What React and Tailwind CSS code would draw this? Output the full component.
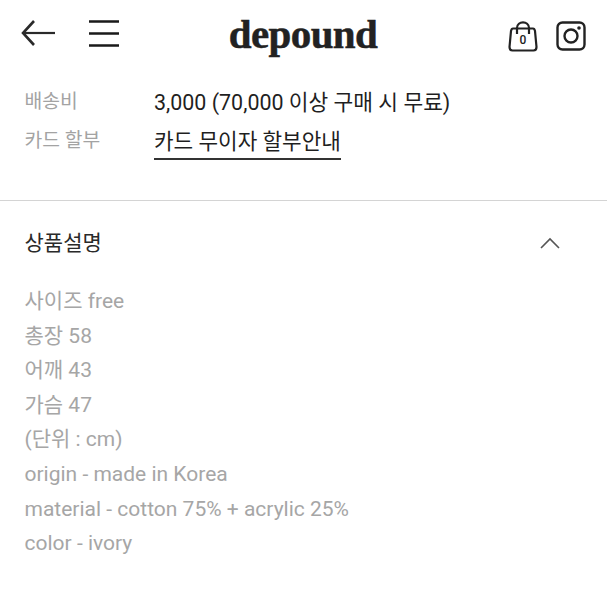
export default function App() {
  const lines = ["사이즈 free", "총장 58", "어깨 43", "가슴 47", "(단위 : cm)", "origin - made in Korea", "material - cotton 75% + acrylic 25%", "color - ivory"];
  return (
    <div className="w-[607px] h-[607px] bg-white overflow-hidden font-['Roboto','Noto_Sans_CJK_KR',sans-serif]">
      <header className="h-[70px] flex items-center justify-between pl-[21px] pr-[21px] pb-[2px]">
        <div className="flex items-center gap-[34px] mb-[2px]">
          <svg width="34" height="28" viewBox="0 0 34 28" fill="none" stroke="#2a2a2a" strokeWidth="2.6">
            <path d="M13 2 L2 14 L13 26" />
            <path d="M2 14 H34" strokeWidth="2.2" />
          </svg>
          <svg width="30" height="28" viewBox="0 0 30 28" fill="none" stroke="#1a1a1a" strokeWidth="2.4">
            <path d="M0 2.5H30M0 14.5H30M0 26.5H30" />
          </svg>
        </div>
        <div className="font-['Liberation_Serif',serif] font-bold text-[41px] leading-none tracking-[-0.6px] text-[#222] [-webkit-text-stroke:0.5px_#222] mr-[21px] mt-[1px]">depound</div>
        <div className="flex items-center gap-[18px] mt-[4px]">
          <div className="relative w-[30px] h-[32px]">
            <svg width="30" height="32" viewBox="0 0 30 32" fill="none" stroke="#222" strokeWidth="2.2">
              <path d="M5 8.5 H25 Q26.5 8.5 27 11 L28.5 27 Q28.5 30.5 25.5 30.5 H4.5 Q1.5 30.5 1.5 27 L3 11 Q3.500 8.500 5 8.500Z" strokeLinejoin="round" />
              <path d="M9 14 V8 C9 0.500 21 0.500 21 8 V14" />
            </svg>
            <span className="absolute left-0 right-0 top-[13px] text-center text-[12px] leading-[14px] font-medium text-[#222]">0</span>
          </div>
          <svg width="30" height="30" viewBox="0 0 30 30" fill="none" stroke="#222" strokeWidth="2.4">
            <rect x="1.500" y="1.500" width="27" height="27" rx="5" />
            <circle cx="15" cy="15" r="6.500" />
            <circle cx="23" cy="7" r="1.800" fill="#222" stroke="none" />
          </svg>
        </div>
      </header>
      <section className="pl-[24.5px] pt-[16px] h-[131px] border-b border-[#d4d4d4]">
        <div className="flex h-[33px] items-center">
          <span className="w-[129.5px] text-[19.3px] text-[#a3a3a3]">배송비</span>
          <span className="text-[21.45px] text-[#1f1f1f] pt-[1px]">3,000 (70,000 이상 구매 시 무료)</span>
        </div>
        <div className="flex items-start mt-[4px]">
          <span className="w-[129.5px] text-[19.3px] leading-[33px] pt-[1px] text-[#a3a3a3]">카드 할부</span>
          <span className="text-[21.3px] leading-[33px] pt-[2px] text-[#1f1f1f] border-b-2 border-[#333]">카드 무이자 할부안내</span>
        </div>
      </section>
      <section className="flex items-center justify-between h-[84px] pl-[24.5px] pr-[47px] pt-[1px]">
        <span className="text-[21px] text-[#2a2a2a]">상품설명</span>
        <svg width="20" height="12" viewBox="0 0 20 12" fill="none" stroke="#555" strokeWidth="1.600" className="mb-[2px]">
          <path d="M1 11 L10 2 L19 11" />
        </svg>
      </section>
      <section className="pl-[24.5px] mt-[-1px] flex flex-col">
        {lines.map((l) => (
          <p key={l} className="text-[21px] leading-[34.6px] text-[#a6a6a6]">{l}</p>
        ))}
      </section>
    </div>
  );
}
